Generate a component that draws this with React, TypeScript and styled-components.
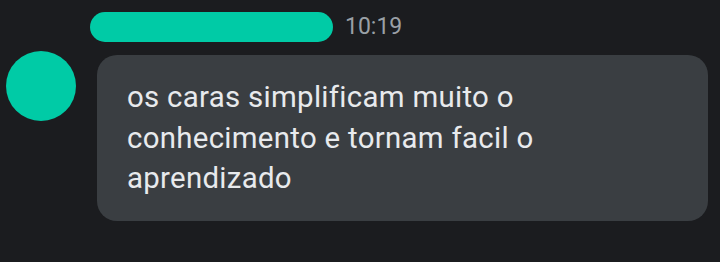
import styled, { createGlobalStyle } from "styled-components";

const GlobalStyle = createGlobalStyle`
  html, body {
    margin: 0;
    padding: 0;
    background: #1b1c1f;
  }
  body {
    font-family: Roboto, "Noto Sans", sans-serif;
  }
`;

const Page = styled.main`
  width: 720px;
  height: 262px;
  box-sizing: border-box;
  padding: 12px 12px 0 6px;
  background: #1b1c1f;
  display: grid;
  grid-template-columns: 70px 1fr;
  grid-template-rows: 30px auto;
  column-gap: 21px;
  row-gap: 13px;
`;

const Header = styled.div`
  grid-column: 2;
  grid-row: 1;
  display: flex;
  align-items: center;
  gap: 12px;
  margin-left: -7px;
`;

const NameBar = styled.div`
  width: 243px;
  height: 30px;
  border-radius: 15px;
  background: #00cba6;
`;

const Time = styled.span`
  font-size: 23px;
  color: #9aa0a6;
  line-height: 30px;
`;

const Avatar = styled.div`
  grid-column: 1;
  grid-row: 2;
  width: 70px;
  height: 70px;
  margin-top: -4px;
  border-radius: 50%;
  background: #00cba6;
`;

const Bubble = styled.div`
  grid-column: 2;
  grid-row: 2;
  height: 166px;
  box-sizing: border-box;
  padding: 22px 30px 0 30px;
  border-radius: 20px;
  background: #3a3e42;
  color: #e8eaed;
  font-size: 29.4px;
  line-height: 40.5px;
  letter-spacing: 0.3px;
  white-space: nowrap;
`;

export default function App() {
  return (
    <>
      <GlobalStyle />
      <Page>
        <Header>
          <NameBar />
          <Time>10:19</Time>
        </Header>
        <Avatar />
        <Bubble>
          os caras simplificam muito o<br />
          conhecimento e tornam facil o<br />
          aprendizado
        </Bubble>
      </Page>
    </>
  );
}
